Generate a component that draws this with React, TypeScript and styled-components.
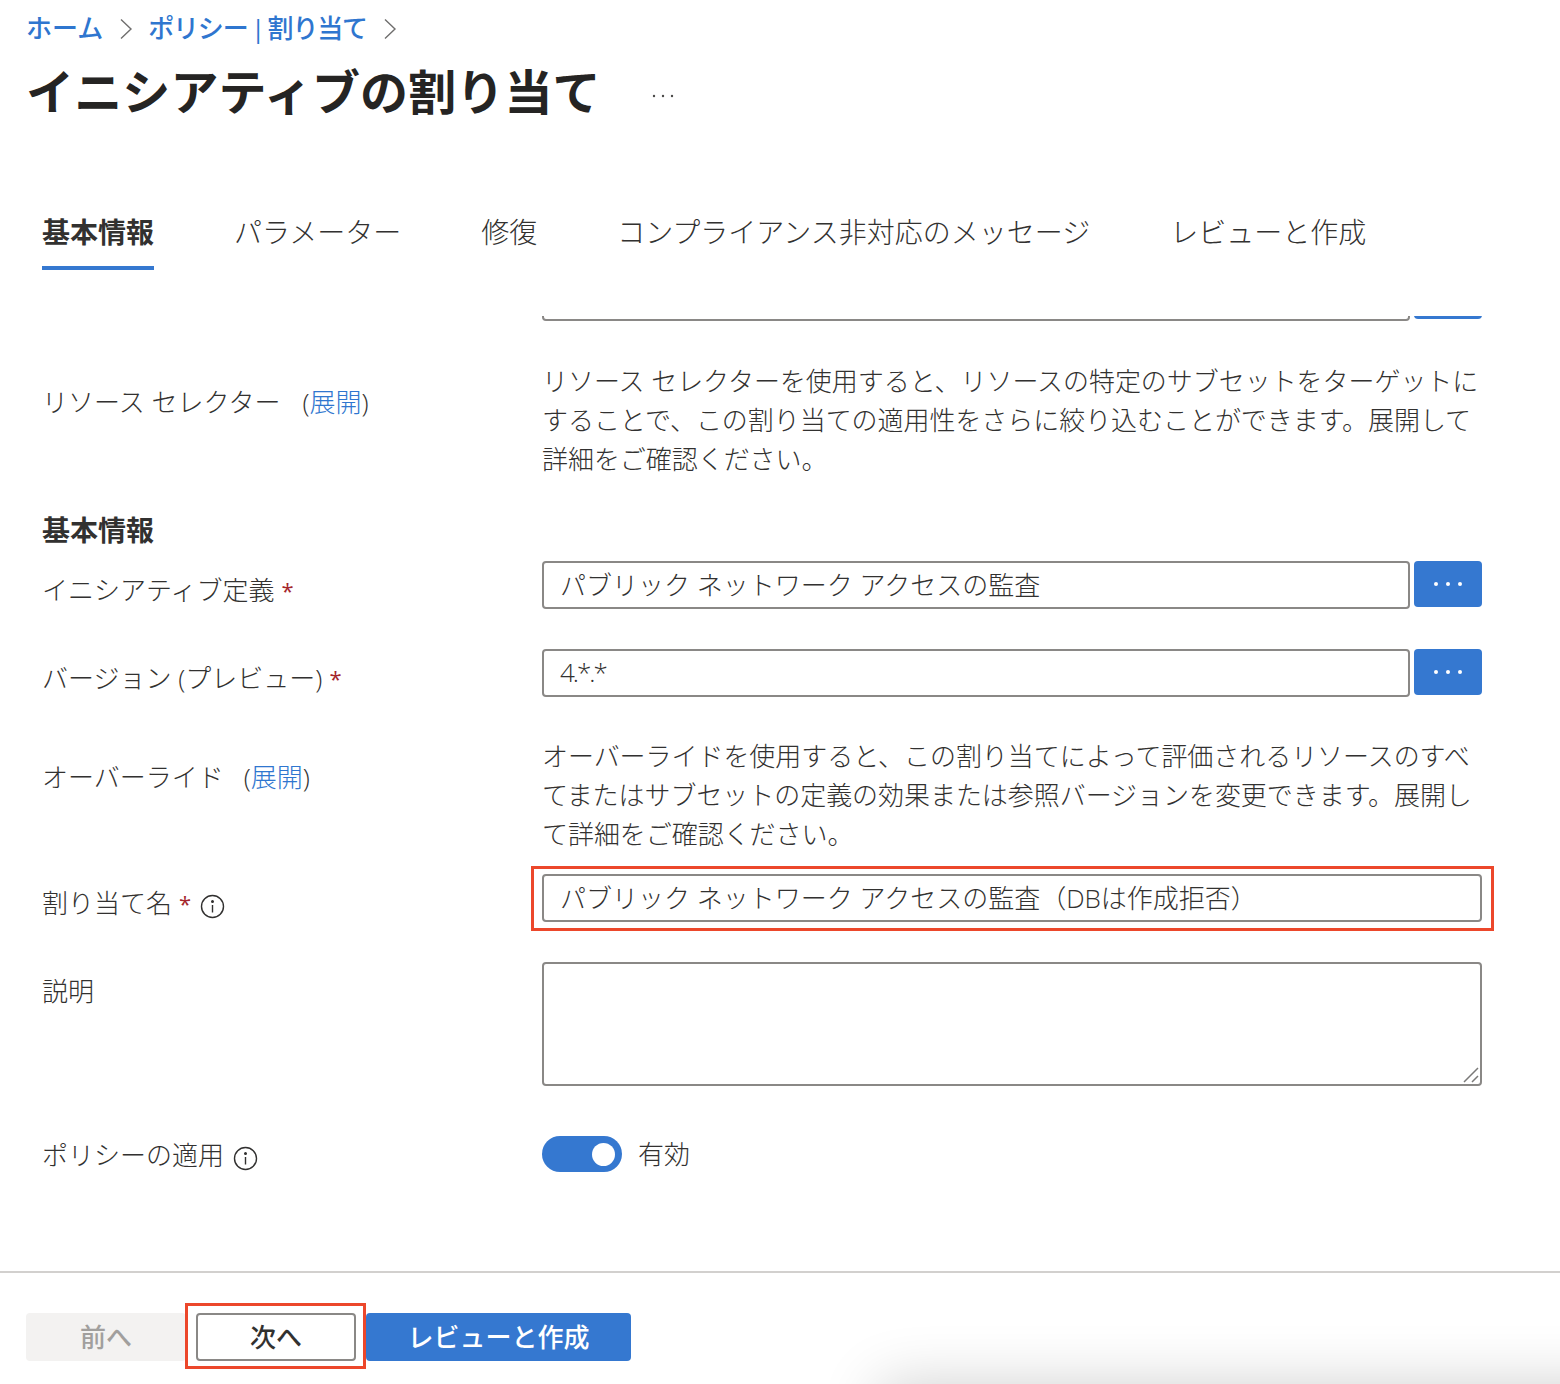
import React from "react";
import styled, { createGlobalStyle } from "styled-components";

const Global = createGlobalStyle`
  html, body { margin: 0; padding: 0; background: #fff; }
  * { box-sizing: border-box; }
  body { font-family: "Open Sans", "Noto Sans CJK JP", "Noto Sans", sans-serif; color: #323130; }
`;

const Page = styled.div`
  position: relative;
  width: 1560px;
  height: 1384px;
  overflow: hidden;
  background: #fff;
  font-size: 26px;
  line-height: 39px;
`;

const Header = styled.header`
  padding: 10px 0 0 26px;
`;

const Breadcrumb = styled.nav`
  display: flex;
  align-items: center;
  height: 36px;
  font-size: 26px;
  font-weight: 500;
  color: #2f76cf;
`;

const Crumb = styled.span<{ $tight?: boolean }>`
  line-height: 36px;
  word-spacing: -2px;
  letter-spacing: ${(p) => (p.$tight ? "-1.2px" : "0")};
`;

const ChevronIcon = styled.svg`
  width: 14px;
  height: 24px;
  margin: 2px 15px 0 16px;
  fill: none;
  stroke: #6f6e6d;
  stroke-width: 1.4;
`;

const TitleRow = styled.div`
  display: flex;
  align-items: center;
  margin-top: 13px;
  height: 63px;
`;

const Title = styled.h1`
  align-self: flex-start;
  margin: 3px 0 0;
  font-size: 48px;
  font-weight: 700;
  line-height: 60px;
  color: #252423;
  letter-spacing: 0.13px;
`;

const MoreIcon = styled.svg`
  width: 26px;
  height: 6px;
  margin: 10px 0 0 50px;
  fill: #4a4948;
`;

const Tabs = styled.div`
  display: flex;
  gap: 80px;
  margin-top: 90px;
  padding-left: 16px;
`;

const Tab = styled.div<{ $active?: boolean }>`
  height: 58px;
  font-size: 28px;
  line-height: 40px;
  font-weight: ${(p) => (p.$active ? 700 : 300)};
  color: #323130;
  border-bottom: 4px solid ${(p) => (p.$active ? "#3578d0" : "transparent")};
`;

const Form = styled.main`
  padding: 46px 78px 0 42px;
`;

const ClippedRow = styled.div`
  display: flex;
  flex-direction: column;
  justify-content: flex-end;
  height: 5px;
  margin-left: 500px;
  overflow: hidden;
`;

const Row = styled.div<{ $top: number }>`
  display: grid;
  grid-template-columns: 500px 940px;
  margin-top: ${(p) => p.$top}px;
`;

const Label = styled.div<{ $pad: number }>`
  display: flex;
  align-items: center;
  height: 38px;
  margin-top: ${(p) => p.$pad}px;
  font-weight: 300;
  white-space: nowrap;
`;

const Star = styled.span`
  color: #a4262c;
  margin-left: 7px;
  font-size: 22px;
  font-weight: 400;
`;

const Expand = styled.span<{ $gap: number }>`
  margin-left: ${(p) => p.$gap}px;
  font-weight: 300;
`;

const LinkText = styled.span`
  color: #2f76cf;
`;

const InfoIcon = styled.svg`
  width: 25px;
  height: 25px;
  margin: 6px 0 0 9px;
  fill: none;
  stroke: #323130;
  stroke-width: 1.4;
`;

const Description = styled.p`
  margin: 0;
  font-weight: 300;
  line-height: 39px;
  letter-spacing: -0.05px;
  white-space: nowrap;
`;

const SectionHeading = styled.h2`
  margin: 31px 0 0;
  font-size: 28px;
  font-weight: 700;
  line-height: 41px;
  color: #323130;
`;

const PickerRow = styled.div`
  display: flex;
  gap: 4px;
  align-items: flex-start;
`;

const TextInput = styled.input<{ $tight?: boolean }>`
  display: block;
  width: 100%;
  height: 48px;
  border: 2px solid #8a8886;
  border-radius: 4px;
  background: #fff;
  padding: 0 16px 2px;
  font-family: inherit;
  font-size: 26px;
  font-weight: 300;
  letter-spacing: ${(p) => (p.$tight ? "-2px" : "0")};
  color: #323130;
  outline: none;
`;

const PickerInput = styled(TextInput)`
  width: 868px;
  flex: none;
`;

const PickerButton = styled.button`
  display: flex;
  align-items: center;
  justify-content: center;
  width: 68px;
  height: 46px;
  flex: none;
  border: 0;
  border-radius: 4px;
  background: #3578d0;
  padding: 0;
`;

const DotsIcon = styled.svg`
  width: 30px;
  height: 6px;
  fill: #fff;
`;

const Highlighted = styled.div<{ $t: number; $r: number; $b: number; $l: number }>`
  position: relative;
  &::after {
    content: "";
    position: absolute;
    top: ${(p) => p.$t}px;
    right: ${(p) => p.$r}px;
    bottom: ${(p) => p.$b}px;
    left: ${(p) => p.$l}px;
    border: 3px solid #ec472b;
    pointer-events: none;
  }
`;

const TextAreaWrap = styled.div`
  position: relative;
  height: 124px;
`;

const TextArea = styled.textarea`
  display: block;
  width: 100%;
  height: 100%;
  border: 2px solid #8a8886;
  border-radius: 4px;
  background: #fff;
  resize: none;
  outline: none;
`;

const GripIcon = styled.svg`
  position: absolute;
  right: 3px;
  bottom: 3px;
  width: 16px;
  height: 16px;
  fill: none;
  stroke: #7a7978;
  stroke-width: 1.5;
`;

const ToggleRow = styled.div`
  display: flex;
  align-items: center;
  gap: 16px;
  height: 36px;
`;

const Toggle = styled.div`
  display: flex;
  align-items: center;
  justify-content: flex-end;
  width: 80px;
  height: 36px;
  padding-right: 7px;
  border-radius: 18px;
  background: #3578d0;
`;

const Knob = styled.div`
  width: 23px;
  height: 23px;
  border-radius: 50%;
  background: #fff;
`;

const ToggleText = styled.span`
  font-weight: 300;
  line-height: 36px;
`;

const Footer = styled.footer`
  margin-top: 97px;
  border-top: 2px solid #d2d0ce;
  padding: 40px 0 0 26px;
  display: flex;
  gap: 10px;
`;

const FooterButton = styled.button<{ $variant: "disabled" | "outline" | "primary" }>`
  display: flex;
  align-items: center;
  justify-content: center;
  height: 48px;
  width: ${(p) => (p.$variant === "primary" ? "265px" : "160px")};
  border-radius: 4px;
  padding: 0 0 2px;
  font-family: inherit;
  font-size: 26px;
  font-weight: 500;
  background: ${(p) =>
    p.$variant === "disabled" ? "#f3f2f1" : p.$variant === "primary" ? "#3578d0" : "#fff"};
  color: ${(p) =>
    p.$variant === "disabled" ? "#a19f9d" : p.$variant === "primary" ? "#fff" : "#323130"};
  border: ${(p) => (p.$variant === "outline" ? "2px solid #8a8886" : "0")};
`;

const CornerShadow = styled.div`
  position: absolute;
  left: 880px;
  top: 1384px;
  width: 800px;
  height: 100px;
  box-shadow: 0 0 60px rgba(0, 0, 0, 0.19);
`;

const Chevron = () => (
  <ChevronIcon viewBox="0 0 14 24">
    <path d="M2 2.5 L12 12 L2 21.5" />
  </ChevronIcon>
);

const Info = () => (
  <InfoIcon viewBox="0 0 25 25">
    <circle cx="12.5" cy="12.5" r="11" />
    <path d="M12.5 11 V18.5" />
    <circle cx="12.5" cy="7.5" r="0.8" fill="#323130" />
  </InfoIcon>
);

const Dots = () => (
  <DotsIcon viewBox="0 0 30 6">
    <circle cx="3" cy="3" r="2" />
    <circle cx="15" cy="3" r="2" />
    <circle cx="27" cy="3" r="2" />
  </DotsIcon>
);

const Picker = ({ value, tight }: { value: string; tight?: boolean }) => (
  <PickerRow>
    <PickerInput readOnly value={value} $tight={tight} />
    <PickerButton type="button" aria-label="参照">
      <Dots />
    </PickerButton>
  </PickerRow>
);

export default function App() {
  return (
    <Page>
      <Global />
      <Header>
        <Breadcrumb>
          <Crumb>ホーム</Crumb>
          <Chevron />
          <Crumb $tight>ポリシー | 割り当て</Crumb>
          <Chevron />
        </Breadcrumb>
        <TitleRow>
          <Title>イニシアティブの割り当て</Title>
          <MoreIcon viewBox="0 0 26 6">
            <circle cx="3" cy="3" r="1.2" />
            <circle cx="12" cy="3" r="1.2" />
            <circle cx="21" cy="3" r="1.2" />
          </MoreIcon>
        </TitleRow>
        <Tabs>
          <Tab $active>基本情報</Tab>
          <Tab>パラメーター</Tab>
          <Tab>修復</Tab>
          <Tab>コンプライアンス非対応のメッセージ</Tab>
          <Tab>レビューと作成</Tab>
        </Tabs>
      </Header>

      <Form>
        <ClippedRow>
          <Picker value="" />
        </ClippedRow>

        <Row $top={41}>
          <Label $pad={21}>
            リソース セレクター
            <Expand $gap={22}>
              (<LinkText>展開</LinkText>)
            </Expand>
          </Label>
          <Description>
            リソース セレクターを使用すると、リソースの特定のサブセットをターゲットに
            <br />
            することで、この割り当ての適用性をさらに絞り込むことができます。展開して
            <br />
            詳細をご確認ください。
          </Description>
        </Row>

        <SectionHeading>基本情報</SectionHeading>

        <Row $top={10}>
          <Label $pad={10}>
            イニシアティブ定義<Star>*</Star>
          </Label>
          <Picker value="パブリック ネットワーク アクセスの監査" />
        </Row>

        <Row $top={40}>
          <Label $pad={10}>
            バージョン (プレビュー)<Star>*</Star>
          </Label>
          <Picker value="4.*.*" tight />
        </Row>

        <Row $top={40}>
          <Label $pad={21}>
            オーバーライド
            <Expand $gap={20}>
              (<LinkText>展開</LinkText>)
            </Expand>
          </Label>
          <Description>
            オーバーライドを使用すると、この割り当てによって評価されるリソースのすべ
            <br />
            てまたはサブセットの定義の効果または参照バージョンを変更できます。展開し
            <br />
            て詳細をご確認ください。
          </Description>
        </Row>

        <Row $top={20}>
          <Label $pad={10}>
            割り当て名<Star>*</Star>
            <Info />
          </Label>
          <Highlighted $t={-8} $r={-12} $b={-9} $l={-11}>
            <TextInput readOnly value="パブリック ネットワーク アクセスの監査（DBは作成拒否）" />
          </Highlighted>
        </Row>

        <Row $top={40}>
          <Label $pad={10}>説明</Label>
          <TextAreaWrap>
            <TextArea readOnly />
            <GripIcon viewBox="0 0 16 16">
              <path d="M1 15 L15 1 M9 15 L15 9" />
            </GripIcon>
          </TextAreaWrap>
        </Row>

        <Row $top={50}>
          <Label $pad={0}>
            ポリシーの適用
            <Info />
          </Label>
          <ToggleRow>
            <Toggle>
              <Knob />
            </Toggle>
            <ToggleText>有効</ToggleText>
          </ToggleRow>
        </Row>
      </Form>

      <Footer>
        <FooterButton $variant="disabled" type="button">前へ</FooterButton>
        <Highlighted $t={-10} $r={-10} $b={-8} $l={-11}>
          <FooterButton $variant="outline" type="button">次へ</FooterButton>
        </Highlighted>
        <FooterButton $variant="primary" type="button">レビューと作成</FooterButton>
      </Footer>
      <CornerShadow />
    </Page>
  );
}
